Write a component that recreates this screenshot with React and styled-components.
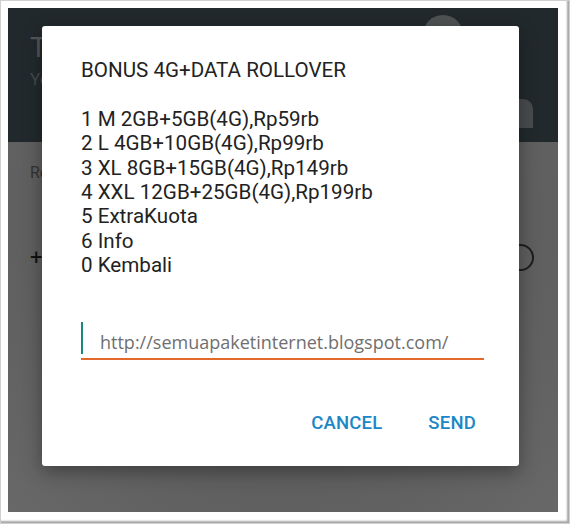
import React from "react";
import styled, { createGlobalStyle } from "styled-components";

const GlobalStyle = createGlobalStyle`
  html, body {
    margin: 0;
    padding: 0;
    background: #ffffff;
  }
`;

const Frame = styled.div`
  box-sizing: border-box;
  width: 570px;
  height: 524px;
  padding: 7px 10px 10px 7px;
  border: 1px solid #cfcfcf;
  box-shadow: inset -2px -2px 2px rgba(0, 0, 0, 0.35);
  background: #ffffff;
`;

const Screen = styled.div`
  position: relative;
  width: 550px;
  height: 504px;
  display: flex;
  flex-direction: column;
  overflow: hidden;
  font-family: Roboto, "Noto Sans", sans-serif;
`;

const AppBar = styled.div`
  height: 134px;
  background: #22292c;
  box-sizing: border-box;
  padding: 21px 22px 0;
  position: relative;
`;

const BarTitle = styled.div`
  font-size: 28px;
  color: #545759;
  line-height: 38px;
`;

const BarSub = styled.div`
  font-size: 17px;
  color: #44494c;
  line-height: 24px;
`;

const Avatar = styled.div`
  position: absolute;
  left: 415px;
  top: 7px;
  width: 40px;
  height: 40px;
  border-radius: 50%;
  background: #4f5253;
`;

const SideShape = styled.div`
  position: absolute;
  left: 497px;
  top: 91px;
  width: 28px;
  height: 29px;
  border-radius: 0 10px 0 0;
  background: #484b4c;
`;

const Content = styled.div`
  flex: 1;
  background: radial-gradient(ellipse at 50% 20%, #555555 0%, #5c5c5c 55%, #686868 100%);
  padding: 21px 22px 0;
  position: relative;
`;

const ContentLabel = styled.div`
  font-size: 16px;
  color: #333333;
  line-height: 20px;
`;

const PlusRow = styled.div`
  margin-top: 61px;
  display: flex;
  align-items: center;
  justify-content: space-between;
  padding-right: 2px;
`;

const Plus = styled.span`
  font-size: 22px;
  color: #111111;
`;

const Radio = styled.span`
  width: 23px;
  height: 23px;
  border: 2px solid #1d1d1d;
  border-radius: 50%;
`;

const Dialog = styled.div`
  position: absolute;
  left: 34px;
  top: 18px;
  width: 477px;
  height: 440px;
  box-sizing: border-box;
  background: #ffffff;
  border-radius: 3px;
  box-shadow: 0 6px 18px rgba(0, 0, 0, 0.35);
  padding: 32px 37px 0 39px;
  display: flex;
  flex-direction: column;
`;

const Message = styled.div`
  font-size: 20.6px;
  line-height: 24.4px;
  color: #222222;
  white-space: pre;
`;

const Field = styled.div`
  margin-top: 44px;
  display: flex;
  align-items: center;
  height: 36px;
  border-bottom: 2px solid #e2682c;
  margin-right: -2px;
`;

const Caret = styled.span`
  align-self: flex-start;
  width: 2px;
  height: 32px;
  background: #168a7d;
`;

const Hint = styled.span`
  margin-left: 17px;
  font-family: "Open Sans", "Noto Sans", sans-serif;
  font-size: 18px;
  color: #6f6f6f;
  padding-top: 4px;
`;

const Actions = styled.div`
  margin-top: 52px;
  display: flex;
  justify-content: flex-end;
  gap: 46px;
  padding-right: 6px;
`;

const ActionButton = styled.button`
  background: none;
  border: none;
  padding: 0;
  font-family: Roboto, "Noto Sans", sans-serif;
  font-weight: 500;
  font-size: 18.5px;
  line-height: 22px;
  letter-spacing: 0.2px;
  color: #1c86c6;
  cursor: pointer;
`;

const message = `BONUS 4G+DATA ROLLOVER

1 M 2GB+5GB(4G),Rp59rb
2 L 4GB+10GB(4G),Rp99rb
3 XL 8GB+15GB(4G),Rp149rb
4 XXL 12GB+25GB(4G),Rp199rb
5 ExtraKuota
6 Info
0 Kembali`;

export default function App() {
  return (
    <>
      <GlobalStyle />
      <Frame>
        <Screen>
          <AppBar>
            <BarTitle>T</BarTitle>
            <BarSub>Yo</BarSub>
            <Avatar />
            <SideShape />
          </AppBar>
          <Content>
            <ContentLabel>Re</ContentLabel>
            <PlusRow>
              <Plus>+</Plus>
              <Radio />
            </PlusRow>
          </Content>
          <Dialog>
            <Message>{message}</Message>
            <Field>
              <Caret />
              <Hint>http://semuapaketinternet.blogspot.com/</Hint>
            </Field>
            <Actions>
              <ActionButton>CANCEL</ActionButton>
              <ActionButton>SEND</ActionButton>
            </Actions>
          </Dialog>
        </Screen>
      </Frame>
    </>
  );
}
